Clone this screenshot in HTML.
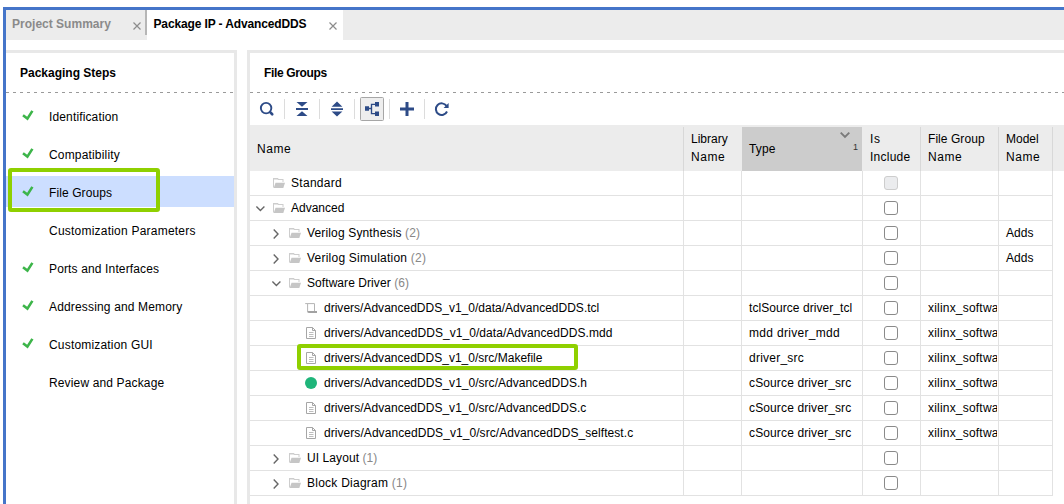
<!DOCTYPE html>
<html>
<head>
<meta charset="utf-8">
<title>Package IP - AdvancedDDS</title>
<style>
*{box-sizing:border-box;margin:0;padding:0}
html,body{width:1064px;height:504px;overflow:hidden;background:#fff}
body{position:relative;font-family:"Liberation Sans",Arial,sans-serif;font-size:12px;color:#000}
.abs{position:absolute}
.t{position:absolute;white-space:nowrap;line-height:14px;height:14px}
.b{font-weight:bold}
#bl{left:3px;top:7px;width:3px;height:497px;background:#4575c9}
#bt{left:3px;top:7px;width:1061px;height:3px;background:#4575c9}
#tabbar{left:6px;top:10px;width:1058px;height:30px;background:#ececec}
#tabact{left:147px;top:10px;width:196px;height:30px;background:#fff}
#tabsep{left:145px;top:10px;width:2px;height:25px;background:#b6b6b6}
#lp{left:6px;top:50px;width:231px;height:460px;border-top:3px solid #e8e8e8;border-right:3px solid #e8e8e8}
#rp{left:247px;top:50px;width:830px;height:460px;border-top:3px solid #e8e8e8;border-left:3px solid #e8e8e8}
.dash{height:1px;background:repeating-linear-gradient(90deg,#9a9a9a 0 3px,transparent 3px 7px)}
#sel{left:6px;top:176px;width:228px;height:31px;background:#ccdeff}
.gbox{border:4px solid #8fd000;border-radius:3px}
.chk{position:absolute;left:22px;width:12px;height:11px}
.sep{position:absolute;top:99px;width:1px;height:20px;background:#dcdcdc}
#thead{left:250px;top:125px;width:814px;height:46px;background:#ececec}
#thtype{left:742px;top:127px;width:120px;height:44px;background:#cccccc}
.vl{position:absolute;width:1px;background:#e2e2e2}
.hl{position:absolute;left:250px;width:803px;height:1px;background:#e2e2e2}
.cb{position:absolute;left:884px;width:14px;height:14px;border:1.6px solid #8a8a8a;border-radius:3px;background:#fff}
.cb.dis{border-color:#cdcdcd;background:#ebecee}
.g{color:#888}
.fg{position:absolute;left:928px;width:69px;letter-spacing:0.2px;overflow:hidden;white-space:nowrap;line-height:14px;height:16px}
svg{position:absolute;overflow:visible}
</style>
</head>
<body>
<div class="abs" id="bt"></div>
<div class="abs" id="bl"></div>
<div class="abs" id="tabbar"></div>
<div class="abs" id="tabact"></div>
<div class="abs" id="tabsep"></div>
<div class="t b" style="letter-spacing:0.01px;left:12px;top:17px;color:#8a8a8a">Project Summary</div>
<div class="t b" style="letter-spacing:-0.13px;left:153.5px;top:17px">Package IP - AdvancedDDS</div>
<svg style="left:133px;top:22px" width="8" height="8" viewBox="0 0 8 8"><path d="M0.5 0.5L7.5 7.5M7.5 0.5L0.5 7.5" stroke="#8c8c8c" stroke-width="1.2" fill="none"/></svg>
<svg style="left:329px;top:22px" width="8" height="8" viewBox="0 0 8 8"><path d="M0.5 0.5L7.5 7.5M7.5 0.5L0.5 7.5" stroke="#8c8c8c" stroke-width="1.2" fill="none"/></svg>

<div class="abs" id="lp"></div>
<div class="abs" id="rp"></div>
<div class="t b" style="letter-spacing:-0.0px;left:20px;top:66px">Packaging Steps</div>
<div class="t b" style="letter-spacing:-0.35px;left:264px;top:66px">File Groups</div>
<div class="abs dash" style="left:6px;top:92px;width:228px"></div>
<div class="abs dash" style="left:250px;top:92px;width:814px"></div>

<!-- left nav -->
<div class="abs" id="sel"></div>
<div class="abs gbox" style="left:8px;top:168px;width:152px;height:44px"></div>
<div class="t" style="letter-spacing:0.14px;left:49px;top:110px">Identification</div>
<div class="t" style="letter-spacing:0.17px;left:49px;top:148px">Compatibility</div>
<div class="t" style="letter-spacing:0.1px;left:49px;top:186px">File Groups</div>
<div class="t" style="letter-spacing:0.22px;left:49px;top:224px">Customization Parameters</div>
<div class="t" style="letter-spacing:0.14px;left:49px;top:262px">Ports and Interfaces</div>
<div class="t" style="letter-spacing:0.16px;left:49px;top:300px">Addressing and Memory</div>
<div class="t" style="letter-spacing:0.18px;left:49px;top:338px">Customization GUI</div>
<div class="t" style="letter-spacing:0.14px;left:49px;top:376px">Review and Package</div>
<svg class="chk" style="top:110px" viewBox="0 0 12 11"><path d="M1 5.3L5.4 8.6L10.4 0.9" stroke="#3db54a" stroke-width="2.6" fill="none"/></svg>
<svg class="chk" style="top:148px" viewBox="0 0 12 11"><path d="M1 5.3L5.4 8.6L10.4 0.9" stroke="#3db54a" stroke-width="2.6" fill="none"/></svg>
<svg class="chk" style="top:186px" viewBox="0 0 12 11"><path d="M1 5.3L5.4 8.6L10.4 0.9" stroke="#3db54a" stroke-width="2.6" fill="none"/></svg>
<svg class="chk" style="top:262px" viewBox="0 0 12 11"><path d="M1 5.3L5.4 8.6L10.4 0.9" stroke="#3db54a" stroke-width="2.6" fill="none"/></svg>
<svg class="chk" style="top:300px" viewBox="0 0 12 11"><path d="M1 5.3L5.4 8.6L10.4 0.9" stroke="#3db54a" stroke-width="2.6" fill="none"/></svg>
<svg class="chk" style="top:338px" viewBox="0 0 12 11"><path d="M1 5.3L5.4 8.6L10.4 0.9" stroke="#3db54a" stroke-width="2.6" fill="none"/></svg>

<!-- toolbar -->
<div class="sep" style="left:284px"></div>
<div class="sep" style="left:319px"></div>
<div class="sep" style="left:354px"></div>
<div class="sep" style="left:389px"></div>
<div class="sep" style="left:424px"></div>
<div class="abs" style="left:360px;top:97px;width:24px;height:24px;border:1px solid #a6a6a6;border-radius:1.5px;background:#eeeeee"></div>
<svg style="left:258px;top:100px" width="18" height="18" viewBox="0 0 18 18"><circle cx="8.1" cy="8.1" r="5.25" stroke="#2d4b87" stroke-width="1.9" fill="none"/><path d="M12.4 12.4L14.2 14.2" stroke="#2d4b87" stroke-width="2.7" stroke-linecap="round"/></svg>
<svg style="left:296px;top:102px" width="12" height="14" viewBox="0 0 12 14"><path d="M0.5 0H11.5L6 4.7Z M0 6H12V8H0Z M0.5 14H11.5L6 9.3Z" fill="#2d4b87"/></svg>
<svg style="left:331px;top:101px" width="12" height="16" viewBox="0 0 12 16"><path d="M0.6 5.8H11.4L6 0.6Z M0 7.2H12V9H0Z M0.6 10.4H11.4L6 15.4Z" fill="#2d4b87"/></svg>
<svg style="left:365px;top:102px" width="14" height="14" viewBox="0 0 14 14"><path d="M0 4.2H4V8.8H0Z M10 0H14V4.6H10Z M10 9.4H14V14H10Z" fill="#2d4b87"/><path d="M4 6.5H6.5M10 2.4H6.5V11.6H10" stroke="#2d4b87" stroke-width="1.35" fill="none"/></svg>
<svg style="left:400px;top:102px" width="14" height="14" viewBox="0 0 14 14"><path d="M5.5 0H8.5V14H5.5Z M0 5.4H14V8.6H0Z" fill="#2d4b87"/></svg>
<svg style="left:435px;top:102px" width="14" height="14" viewBox="0 0 14 14"><path d="M11.5 3.9A5.8 5.8 0 1 0 12 9.5" stroke="#2d4b87" stroke-width="2" fill="none"/><path d="M13.6 1V5.9H8.6Z" fill="#2d4b87"/></svg>

<!-- table header -->
<div class="abs" id="thead"></div>
<div class="abs" id="thtype"></div>
<div class="vl" style="left:683px;top:127px;height:44px;background:#d8d8d8"></div>
<div class="vl" style="left:920px;top:127px;height:44px;background:#d8d8d8"></div>
<div class="vl" style="left:998px;top:127px;height:44px;background:#d8d8d8"></div>
<div class="vl" style="left:1052px;top:127px;height:44px;background:#d8d8d8"></div>
<div class="t" style="letter-spacing:0.55px;left:257px;top:142px">Name</div>
<div class="t" style="letter-spacing:-0.0px;left:691px;top:132px">Library</div>
<div class="t" style="letter-spacing:0.55px;left:691px;top:150px">Name</div>
<div class="t" style="letter-spacing:0.16px;left:749px;top:142px">Type</div>
<div class="t" style="letter-spacing:0.75px;left:870px;top:132px">Is</div>
<div class="t" style="letter-spacing:0.25px;left:870px;top:150px">Include</div>
<div class="t" style="letter-spacing:0.06px;left:928px;top:132px">File Group</div>
<div class="t" style="letter-spacing:0.55px;left:928px;top:150px">Name</div>
<div class="t" style="letter-spacing:-0.02px;left:1006px;top:132px">Model</div>
<div class="t" style="letter-spacing:0.55px;left:1006px;top:150px">Name</div>
<svg style="left:840px;top:132px" width="10" height="6" viewBox="0 0 10 6"><path d="M0.7 0.7L5 5L9.3 0.7" stroke="#7a7a7a" stroke-width="1.9" fill="none"/></svg>
<div class="t" style="left:853px;top:140px;font-size:9px;color:#333">1</div>

<!-- grid lines -->
<div class="vl" style="left:683px;top:171px;height:325px"></div>
<div class="vl" style="left:741px;top:171px;height:325px"></div>
<div class="vl" style="left:862px;top:171px;height:325px"></div>
<div class="vl" style="left:920px;top:171px;height:325px"></div>
<div class="vl" style="left:998px;top:171px;height:325px"></div>
<div class="vl" style="left:1052px;top:171px;height:325px"></div>
<div class="hl" style="top:195px"></div>
<div class="hl" style="top:220px"></div>
<div class="hl" style="top:245px"></div>
<div class="hl" style="top:270px"></div>
<div class="hl" style="top:295px"></div>
<div class="hl" style="top:320px"></div>
<div class="hl" style="top:345px"></div>
<div class="hl" style="top:370px"></div>
<div class="hl" style="top:395px"></div>
<div class="hl" style="top:420px"></div>
<div class="hl" style="top:445px"></div>
<div class="hl" style="top:470px"></div>
<div class="hl" style="top:495px"></div>

<!-- ROWS -->
<svg style="left:273px;top:178px" width="12" height="10" viewBox="0 0 12 10"><path d="M0 0H4.8L5.8 1H10.5V4H9.5V2H5.2L4.4 1.4H1V9.6H0Z" fill="#cdcdcd"/><path d="M2.5 4.8H12L10.3 9.9H0.7Z" fill="#c6c6c6"/></svg>
<div class="t" style="letter-spacing:0.29px;left:291px;top:176px">Standard</div>
<div class="cb dis" style="top:176px"></div>
<svg style="left:256px;top:206px" width="9" height="6" viewBox="0 0 9 6"><path d="M0.4 0.6L4.4 4.5L8.4 0.6" stroke="#666" stroke-width="1.4" fill="none"/></svg>
<svg style="left:273px;top:203px" width="12" height="10" viewBox="0 0 12 10"><path d="M0 0H4.8L5.8 1H10.5V4H9.5V2H5.2L4.4 1.4H1V9.6H0Z" fill="#cdcdcd"/><path d="M2.5 4.8H12L10.3 9.9H0.7Z" fill="#c6c6c6"/></svg>
<div class="t" style="letter-spacing:0.0px;left:291px;top:201px">Advanced</div>
<div class="cb" style="top:201px"></div>
<svg style="left:273px;top:228.5px" width="6" height="10" viewBox="0 0 6 10"><path d="M0.7 0.6L5 5L0.7 9.4" stroke="#666" stroke-width="1.4" fill="none"/></svg>
<svg style="left:289px;top:228px" width="12" height="10" viewBox="0 0 12 10"><path d="M0 0H4.8L5.8 1H10.5V4H9.5V2H5.2L4.4 1.4H1V9.6H0Z" fill="#cdcdcd"/><path d="M2.5 4.8H12L10.3 9.9H0.7Z" fill="#c6c6c6"/></svg>
<div class="t" style="letter-spacing:0.15px;left:307px;top:226px">Verilog Synthesis <span class="g">(2)</span></div>
<div class="t" style="letter-spacing:0.01px;left:1006px;top:226px">Adds</div>
<div class="cb" style="top:226px"></div>
<svg style="left:273px;top:253.5px" width="6" height="10" viewBox="0 0 6 10"><path d="M0.7 0.6L5 5L0.7 9.4" stroke="#666" stroke-width="1.4" fill="none"/></svg>
<svg style="left:289px;top:253px" width="12" height="10" viewBox="0 0 12 10"><path d="M0 0H4.8L5.8 1H10.5V4H9.5V2H5.2L4.4 1.4H1V9.6H0Z" fill="#cdcdcd"/><path d="M2.5 4.8H12L10.3 9.9H0.7Z" fill="#c6c6c6"/></svg>
<div class="t" style="letter-spacing:0.23px;left:307px;top:251px">Verilog Simulation <span class="g">(2)</span></div>
<div class="t" style="letter-spacing:0.01px;left:1006px;top:251px">Adds</div>
<div class="cb" style="top:251px"></div>
<svg style="left:272px;top:281px" width="9" height="6" viewBox="0 0 9 6"><path d="M0.4 0.6L4.4 4.5L8.4 0.6" stroke="#666" stroke-width="1.4" fill="none"/></svg>
<svg style="left:289px;top:278px" width="12" height="10" viewBox="0 0 12 10"><path d="M0 0H4.8L5.8 1H10.5V4H9.5V2H5.2L4.4 1.4H1V9.6H0Z" fill="#cdcdcd"/><path d="M2.5 4.8H12L10.3 9.9H0.7Z" fill="#c6c6c6"/></svg>
<div class="t" style="letter-spacing:0.07px;left:307px;top:276px">Software Driver <span class="g">(6)</span></div>
<div class="cb" style="top:276px"></div>
<svg style="left:305px;top:303px" width="12" height="10" viewBox="0 0 12 10"><path d="M0.2 0.6H9.5V8M2.6 1V8" stroke="#b4b4b4" stroke-width="1" fill="none"/><path d="M2.1 8H12V10H3.8Q2.1 10 2.1 8Z" fill="#a2a2a2"/></svg>
<div class="t" style="letter-spacing:0.01px;left:324px;top:301px">drivers/AdvancedDDS_v1_0/data/AdvancedDDS.tcl</div>
<div class="t" style="letter-spacing:0.06px;left:749px;top:301px">tclSource driver_tcl</div>
<div class="fg" style="top:301px">xilinx_software_driver</div>
<div class="cb" style="top:301px"></div>
<svg style="left:306px;top:326.5px" width="10" height="12" viewBox="0 0 10 12"><path d="M0.5 0.5H6.5L9.5 3.5V11.5H0.5Z" stroke="#a6a6a6" stroke-width="1" fill="#fff"/><path d="M6.5 0.5V3.5H9.5" stroke="#a6a6a6" stroke-width="1" fill="none"/><path d="M3 5.5H7.5M3 7.5H7.5M3 9.5H7.5" stroke="#bdbdbd" stroke-width="1" fill="none"/></svg>
<div class="t" style="letter-spacing:0.05px;left:324px;top:326px">drivers/AdvancedDDS_v1_0/data/AdvancedDDS.mdd</div>
<div class="t" style="letter-spacing:0.31px;left:749px;top:326px">mdd driver_mdd</div>
<div class="fg" style="top:326px">xilinx_software_driver</div>
<div class="cb" style="top:326px"></div>
<svg style="left:306px;top:351.5px" width="10" height="12" viewBox="0 0 10 12"><path d="M0.5 0.5H6.5L9.5 3.5V11.5H0.5Z" stroke="#a6a6a6" stroke-width="1" fill="#fff"/><path d="M6.5 0.5V3.5H9.5" stroke="#a6a6a6" stroke-width="1" fill="none"/><path d="M3 5.5H7.5M3 7.5H7.5M3 9.5H7.5" stroke="#bdbdbd" stroke-width="1" fill="none"/></svg>
<div class="t" style="letter-spacing:0.01px;left:324px;top:351px">drivers/AdvancedDDS_v1_0/src/Makefile</div>
<div class="t" style="letter-spacing:0.23px;left:749px;top:351px">driver_src</div>
<div class="fg" style="top:351px">xilinx_software_driver</div>
<div class="cb" style="top:351px"></div>
<svg style="left:305px;top:377px" width="12" height="12" viewBox="0 0 12 12"><circle cx="6" cy="6" r="6" fill="#1fb57a"/></svg>
<div class="t" style="letter-spacing:0.02px;left:324px;top:376px">drivers/AdvancedDDS_v1_0/src/AdvancedDDS.h</div>
<div class="t" style="letter-spacing:0.13px;left:749px;top:376px">cSource driver_src</div>
<div class="fg" style="top:376px">xilinx_software_driver</div>
<div class="cb" style="top:376px"></div>
<svg style="left:306px;top:401.5px" width="10" height="12" viewBox="0 0 10 12"><path d="M0.5 0.5H6.5L9.5 3.5V11.5H0.5Z" stroke="#a6a6a6" stroke-width="1" fill="#fff"/><path d="M6.5 0.5V3.5H9.5" stroke="#a6a6a6" stroke-width="1" fill="none"/><path d="M3 5.5H7.5M3 7.5H7.5M3 9.5H7.5" stroke="#bdbdbd" stroke-width="1" fill="none"/></svg>
<div class="t" style="letter-spacing:0.02px;left:324px;top:401px">drivers/AdvancedDDS_v1_0/src/AdvancedDDS.c</div>
<div class="t" style="letter-spacing:0.13px;left:749px;top:401px">cSource driver_src</div>
<div class="fg" style="top:401px">xilinx_software_driver</div>
<div class="cb" style="top:401px"></div>
<svg style="left:306px;top:426.5px" width="10" height="12" viewBox="0 0 10 12"><path d="M0.5 0.5H6.5L9.5 3.5V11.5H0.5Z" stroke="#a6a6a6" stroke-width="1" fill="#fff"/><path d="M6.5 0.5V3.5H9.5" stroke="#a6a6a6" stroke-width="1" fill="none"/><path d="M3 5.5H7.5M3 7.5H7.5M3 9.5H7.5" stroke="#bdbdbd" stroke-width="1" fill="none"/></svg>
<div class="t" style="letter-spacing:0.06px;left:324px;top:426px">drivers/AdvancedDDS_v1_0/src/AdvancedDDS_selftest.c</div>
<div class="t" style="letter-spacing:0.13px;left:749px;top:426px">cSource driver_src</div>
<div class="fg" style="top:426px">xilinx_software_driver</div>
<div class="cb" style="top:426px"></div>
<svg style="left:273px;top:453.5px" width="6" height="10" viewBox="0 0 6 10"><path d="M0.7 0.6L5 5L0.7 9.4" stroke="#666" stroke-width="1.4" fill="none"/></svg>
<svg style="left:289px;top:453px" width="12" height="10" viewBox="0 0 12 10"><path d="M0 0H4.8L5.8 1H10.5V4H9.5V2H5.2L4.4 1.4H1V9.6H0Z" fill="#cdcdcd"/><path d="M2.5 4.8H12L10.3 9.9H0.7Z" fill="#c6c6c6"/></svg>
<div class="t" style="letter-spacing:0.08px;left:307px;top:451px">UI Layout <span class="g">(1)</span></div>
<div class="cb" style="top:451px"></div>
<svg style="left:273px;top:478.5px" width="6" height="10" viewBox="0 0 6 10"><path d="M0.7 0.6L5 5L0.7 9.4" stroke="#666" stroke-width="1.4" fill="none"/></svg>
<svg style="left:289px;top:478px" width="12" height="10" viewBox="0 0 12 10"><path d="M0 0H4.8L5.8 1H10.5V4H9.5V2H5.2L4.4 1.4H1V9.6H0Z" fill="#cdcdcd"/><path d="M2.5 4.8H12L10.3 9.9H0.7Z" fill="#c6c6c6"/></svg>
<div class="t" style="letter-spacing:0.25px;left:307px;top:476px">Block Diagram <span class="g">(1)</span></div>
<div class="cb" style="top:476px"></div>
<div class="abs gbox" style="left:297px;top:344px;width:281px;height:26px"></div>
</body>
</html>
